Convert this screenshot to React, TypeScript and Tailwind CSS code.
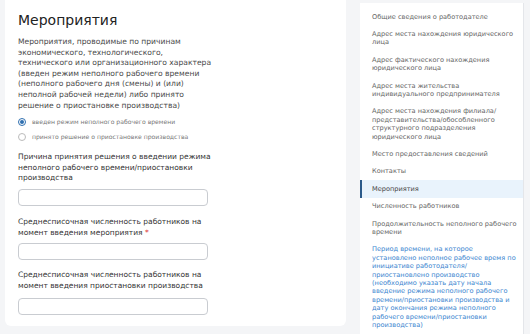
import React from "react";

const font = { fontFamily: '"DejaVu Sans", "Noto Sans", sans-serif' };

function Input() {
  return <div className="h-[17px] w-[190px] rounded-[4px] border border-[#c9ccd1] bg-white" />;
}

const navItems: { lines: string[]; active?: boolean; blue?: boolean }[] = [
  { lines: ["Общие сведения о работодателе"] },
  { lines: ["Адрес места нахождения юридического", "лица"] },
  { lines: ["Адрес фактического нахождения", "юридического лица"] },
  { lines: ["Адрес места жительства", "индивидуального предпринимателя"] },
  {
    lines: [
      "Адрес места нахождения филиала/",
      "представительства/обособленного",
      "структурного подразделения",
      "юридического лица",
    ],
  },
  { lines: ["Место предоставления сведений"] },
  { lines: ["Контакты"] },
  { lines: ["Мероприятия"], active: true },
  { lines: ["Численность работников"] },
  { lines: ["Продолжительность неполного рабочего", "времени"] },
  {
    blue: true,
    lines: [
      "Период времени, на которое",
      "установлено неполное рабочее время по",
      "инициативе работодателя/",
      "приостановлено производство",
      "(необходимо указать дату начала",
      "введение режима неполного рабочего",
      "времени/приостановки производства и",
      "дату окончания режима неполного",
      "рабочего времени/приостановки",
      "производства)",
    ],
  },
];

export default function App() {
  return (
    <div className="flex h-[334px] w-[530px] overflow-hidden bg-[#f4f5f7]" style={font}>
      <div className="ml-[5px] flex h-[326px] w-[341px] flex-col rounded-b-[6px] bg-white pl-[13px] pt-[9px]">
        <div className="text-[14px] leading-[22px] text-[#222]">Мероприятия</div>
        <div className="mt-[6px] text-[7.6px] leading-[10.6px] text-[#4a4a4a]">
          Мероприятия, проводимые по причинам
          <br />
          экономического, технологического,
          <br />
          технического или организационного характера
          <br />
          (введен режим неполного рабочего времени
          <br />
          (неполного рабочего дня (смены) и (или)
          <br />
          неполной рабочей недели) либо принято
          <br />
          решение о приостановке производства)
        </div>
        <div className="mt-[6px] flex flex-col gap-[6px] text-[6.1px] leading-[9px] text-[#777]">
          <div className="flex items-center gap-[6px]">
            <span className="flex h-[8px] w-[8px] items-center justify-center rounded-full border border-[#2f6fb0]">
              <span className="h-[4px] w-[4px] rounded-full bg-[#2f6fb0]" />
            </span>
            введен режим неполного рабочего времени
          </div>
          <div className="flex items-center gap-[6px]">
            <span className="h-[8px] w-[8px] rounded-full border border-[#bbb]" />
            принято решение о приостановке производства
          </div>
        </div>
        <div className="mt-[11px] text-[7.5px] leading-[10.6px] text-[#333]">
          Причина принятия решения о введении режима
          <br />
          неполного рабочего времени/приостановки
          <br />
          производства
        </div>
        <div className="mt-[5px]">
          <Input />
        </div>
        <div className="mt-[10px] text-[7.5px] leading-[11px] text-[#333]">
          Среднесписочная численность работников на
          <br />
          момент введения мероприятия <span className="text-[#d33]">*</span>
        </div>
        <div className="mt-[5px]">
          <Input />
        </div>
        <div className="mt-[9px] text-[7.5px] leading-[11.5px] text-[#333]">
          Среднесписочная численность работников на
          <br />
          момент введения приостановки производства
        </div>
        <div className="mt-[6px]">
          <Input />
        </div>
      </div>
      <div className="ml-[14px] mt-[3px] flex h-[340px] w-[164px] flex-col border-r border-[#e4e6ea] bg-white pt-[5px]">
        {navItems.map((it, i) => (
          <div
            key={i}
            className={
              "border-l-2 py-[4.5px] pl-[10px] pr-[4px] text-[6.6px] leading-[8.4px] " +
              (it.active
                ? "border-[#2b5a8a] bg-[#e9f3fc] text-[#444]"
                : it.blue
                ? "border-transparent text-[#3a85cf]"
                : "border-transparent text-[#666]")
            }
          >
            {it.lines.map((l, j) => (
              <div key={j} className="whitespace-nowrap">
                {l}
              </div>
            ))}
          </div>
        ))}
      </div>
    </div>
  );
}
